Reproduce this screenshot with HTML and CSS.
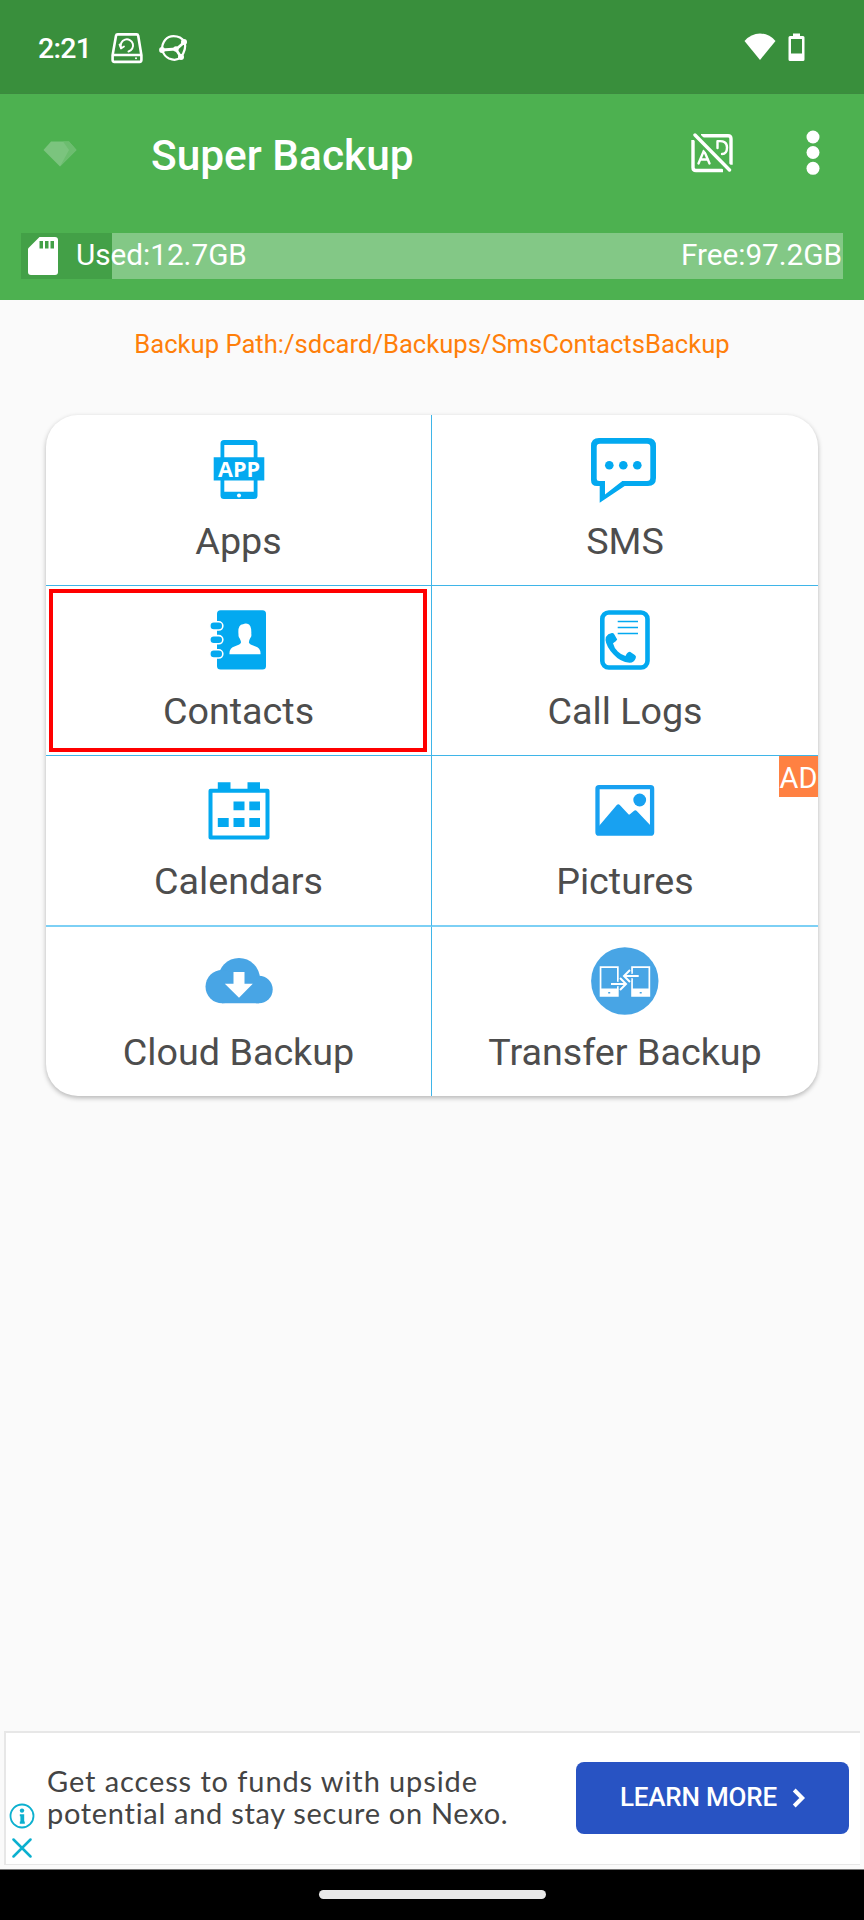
FILE: index.html
```html
<!DOCTYPE html>
<html lang="en">
<head>
<meta charset="utf-8">
<title>Super Backup</title>
<link rel="stylesheet" href="styles.css">
</head>
<body>
<div class="screen">
  <header class="status">
    <span class="clock">2:21</span>
    <svg class="disk" width="32" height="32" viewBox="0 0 32 32" fill="none" stroke="#fff" stroke-width="2.6" stroke-linejoin="round" stroke-linecap="round">
      <path d="M6.6 2.4h19q1.3 0 1.600 1.300l3.200 19.400v5q0 1.800-1.800 1.800H3.400q-1.800 0-1.800-1.800v-5L5 3.700q.3-1.300 1.600-1.300zM2.500 23h27.500"/>
      <path d="M10 15.500a6.200 6.200 0 1 1 7.500 4" stroke-width="2"/><path d="M8.500 12.500l1.500 4 3-2" stroke-width="1.800"/>
      <circle cx="25" cy="26.300" r="1" fill="#fff" stroke="none"/>
    </svg>
    <svg class="globe" width="30" height="30" viewBox="0 0 30 30" fill="none" stroke="#fff" stroke-width="2.200">
      <path d="M4 17C4 8 9 3.200 15.500 3.200 20.500 3.200 24 5 26.500 9q2.200 7-3.500 15c-3 3-8 3.200-12 1.500Q6 23 4 17z"/>
      <path d="M4 17l14-1M18 16.500L26.500 9M18 16.500l5 7.500" stroke-width="2.800"/>
      <g fill="#fff" stroke="none"><circle cx="4" cy="17" r="2.900"/><circle cx="26" cy="9" r="3"/><circle cx="23" cy="24" r="3"/><circle cx="18" cy="16" r="2.700"/></g>
    </svg>
    <svg class="wifi" width="32" height="28" viewBox="0 0 32 28"><path fill="#fff" d="M.5 8Q7 .5 16 .5T31.500 8L16 27z"/></svg>
    <svg class="battery" width="17" height="29" viewBox="0 0 17 29"><path fill="#fff" fill-rule="evenodd" d="M5 .5h7V3h3q1.500 0 1.500 1.500v22q0 1.500-1.500 1.500H2Q.5 28 .5 26.500v-22Q.5 3 2 3h3zM3 6v14.500h11V6z"/></svg>
  </header>

  <section class="appbar">
    <div class="toolbar">
      <svg class="gem" width="34" height="26" viewBox="0 0 34 26"><path fill="#7bc47e" d="M8 .5h18L33.500 9 17 25.500.5 9z"/><path fill="#6cbd6f" d="M20 .5h6L33.500 9 17 25.500 26 9z"/></svg>
      <h1 class="title">Super Backup</h1>
      <svg class="noad" width="42" height="40" viewBox="0 0 42 40" fill="none" stroke="#fff" stroke-width="3.400" stroke-linecap="round" stroke-linejoin="round">
        <path d="M10 2.700H37q3 0 3 3v26M2 7v27.500q0 3 3 3h27" stroke-linecap="butt"/>
        <path d="M7.500 30.500l5.500-13 5.500 13M9.500 26.500h7.500M26.500 15V8.300q9.500-1.300 9.500 6.200 0 6.500-5 6.500" stroke-width="2.400"/>
        <path d="M4 2l34.500 35" stroke="#4db150" stroke-width="8.500" stroke-linecap="butt"/>
        <path d="M4 2l34.500 35"/>
      </svg>
      <svg class="more" width="14" height="46" viewBox="0 0 14 46" fill="#fff"><circle cx="7" cy="7" r="6.500"/><circle cx="7" cy="22.500" r="6.500"/><circle cx="7" cy="38.300" r="6.500"/></svg>
    </div>
    <div class="storage">
      <svg class="sd" width="30" height="38" viewBox="0 0 30 38"><path fill="#fff" d="M11.500 0H27q3 0 3 3v32q0 3-3 3H3q-3 0-3-3V11.500z"/><path fill="#43a047" d="M11.500 4h3.500v7.500h-3.500zM17 4h3.500v7.500H17zM22.500 4H26v7.500h-3.500z"/></svg>
      <span class="used">Used:12.7GB</span>
      <span class="free">Free:97.2GB</span>
    </div>
  </section>

  <main class="content">
    <p class="path">Backup Path:/sdcard/Backups/SmsContactsBackup</p>
    <div class="card">
      <div class="tile first">
        <svg class="icon" viewBox="0 0 68 68" fill="#03a9f0"><path fill-rule="evenodd" d="M19 4h30q3.500 0 3.500 3.500v52q0 3.500-3.500 3.500H19q-3.500 0-3.500-3.500v-52Q15.500 4 19 4zm.3 5v46.700h29.400V9z"/><path d="M8.700 21.300h50.600v23.200H8.700z"/><circle cx="34" cy="59.500" r="2" fill="#fff"/><text class="app-word" x="13" y="40.700" textLength="42" lengthAdjust="spacingAndGlyphs">APP</text></svg>
        <span class="label">Apps</span>
      </div>
      <div class="tile first">
        <svg class="icon" viewBox="0 0 68 68" fill="#03a9f0"><path fill-rule="evenodd" d="M8 2h49q8 0 8 8v32q0 8-8 8H33.700L8.700 66.700V50H6q-6 0-6-6V10q0-8 8-8zm1 5.700q-3.300 0-3.300 3.300v31.500q0 2.500 2.500 2.500H14v13.500L31.300 45H56q3.300 0 3.300-3.300V11q0-3.300-3.300-3.300z"/><circle cx="18.300" cy="29.300" r="4.300"/><circle cx="32.300" cy="29.300" r="4.300"/><circle cx="46.300" cy="29.300" r="4.300"/></svg>
        <span class="label">SMS</span>
      </div>
      <div class="tile marked">
        <svg class="icon" viewBox="0 0 68 68" fill="#03a9f0"><rect x="12" y="4.200" width="49" height="59.300" rx="3.500"/><g stroke="#fff" stroke-width="1.600"><rect x="4.800" y="15.800" width="13" height="8.200" rx="4"/><rect x="4.800" y="29.600" width="13" height="8.200" rx="4"/><rect x="4.800" y="43.800" width="13" height="8.200" rx="4"/></g><path fill="#fff" d="M24.500 48.200Q24 42 30 40.200q5.500-1.700 6-3.700-.2-2-1.300-4-1.500-1.500-1.200-4-1-10 4.500-10.300 2-1 4.300-.5 4.500 1 4 10.300.5 2.500-1 4-1.300 2-1.400 4.500.5 2 6.100 3.700 6 1.800 5.500 8z"/></svg>
        <span class="label">Contacts</span>
      </div>
      <div class="tile">
        <svg class="icon" viewBox="0 0 68 68" fill="#03a9f0"><rect x="11.300" y="6.500" width="45.200" height="55" rx="6.500" fill="none" stroke="#03a9f0" stroke-width="4.600"/><path d="M26.700 14.700H47v1.600H26.700zM26.700 20.700H47v1.600H26.700zM26.700 26.700H47v1.600H26.700z"/><path d="M17.300 28.300l3.500-1.300q1.600-.3 2.400 1.200l3 5.300q-.7 1.600-4.200 3.800 1 4.500 4.800 8.200t7.700 4.500q2-4.200 4.500-4.200l4.800 3.300q1.700 1.200 1 2.900-1.500 4.500-6.200 4.800-9.300-.8-16-8.300-7.300-7.600-8.100-14.500.2-4 2.800-5.700z"/></svg>
        <span class="label">Call Logs</span>
      </div>
      <div class="tile wide-rule">
        <svg class="icon" viewBox="0 0 68 68" fill="#03a9f0"><rect x="5.500" y="14.700" width="57" height="46.800" fill="none" stroke="#03a9f0" stroke-width="4" stroke-linejoin="round"/><path d="M12.800 6.300h12.700v8H12.800zM42.500 6.300H55v8H42.500zM28.500 25.600h11v8.700h-11zM44.300 25.600H55v8.700H44.300zM12.800 42h10.900v9H12.800zM28.500 42h11v9h-11zM44.300 42H55v9H44.300z"/></svg>
        <span class="label">Calendars</span>
      </div>
      <div class="tile wide-rule">
        <svg class="icon" viewBox="0 0 68 68" fill="#18a1f1"><rect x="6.500" y="11.200" width="54.600" height="46.500" rx="1.500" fill="none" stroke="#18a1f1" stroke-width="4.300"/><circle cx="48.700" cy="24" r="6.400"/><path d="M8 50l17.800-21q1.500-1.700 3 0l8.400 9q1 1 2 0l3.600-3q1.500-1.300 3 0L60 50v8H8z"/></svg>
        <span class="label">Pictures</span>
        <span class="badge">AD</span>
      </div>
      <div class="tile last">
        <svg class="icon" viewBox="0 0 68 68" fill="#48a5e5"><circle cx="34" cy="32" r="21"/><circle cx="17.200" cy="39.600" r="16.700"/><circle cx="53.900" cy="42.500" r="13.800"/><path d="M17 32h37v24.300H17z"/><path fill="#fff" d="M28.500 25h11v11.700h8.300L34 50.700l-14.200-14h8.700z"/></svg>
        <span class="label">Cloud Backup</span>
      </div>
      <div class="tile last">
        <svg class="icon" viewBox="0 0 68 68"><circle cx="33.800" cy="34" r="33.700" fill="#48a5e5"/><path fill="#fff" fill-rule="evenodd" d="M8.700 19.300h19v30.400h-19zm1.700 1.700v20.500H26V21zM40.200 19.300h19v30.400h-19zm1.700 1.700v20.500h15.600V21z"/><path d="M17.200 45h2v1.500h-2zM48.700 45h2v1.500h-2z" fill="#48a5e5"/><g fill="none" stroke="#48a5e5" stroke-width="4.500"><path d="M22 37h13M29 31.500l6 5.500-6 5.500M46 29H33M39 23.500L33 29l6 5.500"/></g><g fill="none" stroke="#fff" stroke-width="2"><path d="M20 37h15M29 31l6 6-6 6M47.700 29H33M39 23l-6 6 6 6"/></g></svg>
        <span class="label">Transfer Backup</span>
      </div>
    </div>
  </main>

  <aside class="ad">
    <div class="ad-marks">
      <svg width="26" height="26" viewBox="0 0 26 26"><circle cx="13" cy="13" r="11.500" fill="none" stroke="#0cb0cf" stroke-width="1.800"/><circle cx="13" cy="7.600" r="2.200" fill="#0cb0cf"/><path fill="#0cb0cf" d="M10.800 11.200h4.400v7.300h.6v2.200h-5v-2.200h.6v-5.200h-.6z"/></svg>
      <svg width="26" height="20" viewBox="0 0 26 20"><path d="M4.500 1.500l17 17M21.500 1.500l-17 17" stroke="#0cb0cf" stroke-width="2.500" stroke-linecap="round"/></svg>
    </div>
    <p class="ad-text"><span class="ad-line">Get access to funds with upside</span><span class="ad-line second">potential and stay secure on Nexo.</span></p>
    <div class="cta"><span class="cta-text">LEARN MORE</span><svg width="14" height="20" viewBox="0 0 14 20"><path d="M2.200 2l8 8-8 8" fill="none" stroke="#fff" stroke-width="4"/></svg></div>
  </aside>
  <footer class="nav"><div class="pill"></div></footer>
</div>
</body>
</html>
```
FILE: styles.css
```css
*, *::after { box-sizing: border-box; margin: 0; padding: 0; }
body { background: #fafafa; font-family: Roboto, "Liberation Sans", sans-serif; }
svg { display: block; flex: none; }
.screen { width: 864px; height: 1920px; display: flex; flex-direction: column; overflow: hidden; }

.status { height: 94px; flex: none; background: #398f3c; display: flex; align-items: flex-start; padding: 32px 59px 0 38px; border-bottom: 1px solid #3c8a3f; }
.clock { width: 73px; color: #fff; font-size: 28.500px; line-height: 33px; font-weight: 500; letter-spacing: -.7px; white-space: nowrap; }
.globe { margin: 1px 0 0 15px; }
.wifi { margin: 1px 12px 0 auto; }
.battery { margin-top: 1px; }

.appbar { height: 206px; flex: none; background: #4db150; }
.toolbar { height: 139px; display: flex; align-items: flex-start; padding: 36px 44px 0 43px; }
.gem { margin-top: 11px; }
.title { margin: 1px auto 0 74px; color: #fff; font-size: 42.400px; line-height: 49px; font-weight: 500; white-space: nowrap; }
.noad { margin: 3px 73px 0 0; }
.more { margin-top: 0; }
.storage { width: 822px; height: 46px; margin-left: 21px; display: flex; align-items: center; padding: 0 1px 0 7px; background: linear-gradient(90deg, #43a047 91px, #83c886 91px); color: #fff; font-size: 29.700px; line-height: 46px; }
.used { margin: -3px auto 0 18px; }
.free { margin-top: -3px; }

.content { flex: 1; display: flex; flex-direction: column; align-items: center; }
.path { margin: 28px 0 0; height: 87px; line-height: 32px; font-size: 25.600px; color: #ff7f0a; white-space: nowrap; }
.card { width: 772px; height: 681px; display: grid; grid-template-columns: 386px 386px; grid-template-rows: 171px 170px 171px 169px; background: #fff; border-radius: 32px; box-shadow: 0 2px 5px rgba(0,0,0,.28); overflow: hidden; }
.tile { position: relative; display: flex; flex-direction: column; align-items: center; padding-top: 20px; border-bottom: 1px solid #3fb5e8; }
.tile:nth-child(odd) { border-right: 1px solid #3fb5e8; }
.first { padding-top: 21px; }
.wide-rule { border-bottom: 2px solid #7dd0f5; }
.last { border-bottom: 0; }
.icon { width: 68px; height: 68px; }
.label { margin-top: 15px; color: #4d4d4d; font-size: 37.700px; line-height: 44px; white-space: nowrap; }
.app-word { fill: #fff; font: 700 21px "Open Sans", sans-serif; }
.marked::after { content: ""; position: absolute; left: 3px; top: 3px; width: 378px; height: 163px; border: 4px solid #f00; }
.badge { position: absolute; right: 0; top: 0; width: 39px; height: 41px; background: #ff8142; color: #fff; font-size: 29px; line-height: 44px; text-align: center; }

.ad { width: 856px; height: 134px; flex: none; margin: 0 0 4px 4px; display: flex; background: #fff; border: 2px solid #e7e7e7; border-right: 0; border-bottom-width: 1px; }
.ad-marks { width: 41px; padding: 70px 0 0 3px; display: flex; flex-direction: column; gap: 9px; }
.ad-text { padding-top: 32px; color: #444; font: 29px/32px Lato, sans-serif; }
.ad-line { display: block; white-space: nowrap; letter-spacing: .9px; }
.second { letter-spacing: .7px; }
.cta { width: 273px; height: 72px; margin: 29px 11px 0 auto; display: flex; align-items: center; padding: 0 43px 3px 44px; justify-content: space-between; background: #2853c3; border-radius: 8px; color: #fff; }
.cta svg { margin-top: 2px; }
.cta-text { font: 500 26px/32px Roboto, sans-serif; letter-spacing: -.2px; white-space: nowrap; }
.nav { height: 51px; flex: none; background: #000; border-top: 1px solid #777; display: flex; justify-content: center; padding: 20px 0 0; }
.pill { width: 227px; height: 9px; border-radius: 5px; background: #e9e9e9; }
```
